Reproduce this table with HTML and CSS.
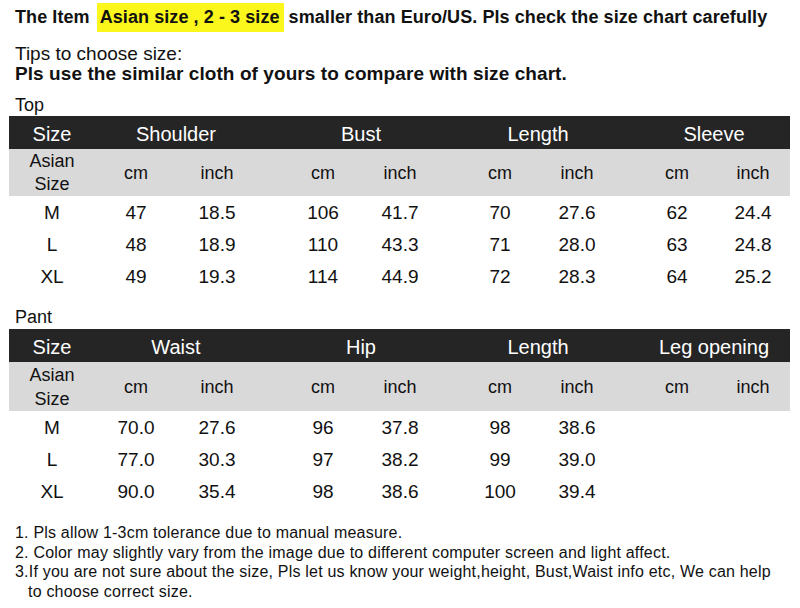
FILE: index.html
```html
<!DOCTYPE html>
<html lang="en">
<head>
<meta charset="utf-8">
<title>Size chart</title>
<link rel="stylesheet" href="styles.css">
</head>
<body>
<div class="headline">
  <span>The Item</span>
  <span class="hl">Asian size , 2 - 3 size</span>
  <span class="rest">smaller than Euro/US. Pls check the size chart carefully</span>
</div>
<p class="tips">Tips to choose size:</p>
<p class="tips-bold">Pls use the similar cloth of yours to compare with size chart.</p>

<p class="label">Top</p>
<div class="chart">
  <div class="row head">
    <div class="c-size">Size</div>
    <div class="g1">Shoulder</div>
    <div class="g2">Bust</div>
    <div class="g3">Length</div>
    <div class="g4">Sleeve</div>
  </div>
  <div class="row cells sub">
    <div class="asian">Asian<br>Size</div>
    <div>cm</div><div>inch</div>
    <div>cm</div><div>inch</div>
    <div>cm</div><div>inch</div>
    <div>cm</div><div>inch</div>
  </div>
  <div class="rows">
    <div class="row cells data"><div>M</div><div>47</div><div>18.5</div><div>106</div><div>41.7</div><div>70</div><div>27.6</div><div>62</div><div>24.4</div></div>
    <div class="row cells data"><div>L</div><div>48</div><div>18.9</div><div>110</div><div>43.3</div><div>71</div><div>28.0</div><div>63</div><div>24.8</div></div>
    <div class="row cells data"><div>XL</div><div>49</div><div>19.3</div><div>114</div><div>44.9</div><div>72</div><div>28.3</div><div>64</div><div>25.2</div></div>
  </div>
</div>

<p class="label label-pant">Pant</p>
<div class="chart chart-pant">
  <div class="row head">
    <div class="c-size">Size</div>
    <div class="g1">Waist</div>
    <div class="g2">Hip</div>
    <div class="g3">Length</div>
    <div class="g4">Leg opening</div>
  </div>
  <div class="row cells sub sub-pant">
    <div class="asian">Asian<br>Size</div>
    <div>cm</div><div>inch</div>
    <div>cm</div><div>inch</div>
    <div>cm</div><div>inch</div>
    <div>cm</div><div>inch</div>
  </div>
  <div class="rows">
    <div class="row cells data"><div>M</div><div>70.0</div><div>27.6</div><div>96</div><div>37.8</div><div>98</div><div>38.6</div></div>
    <div class="row cells data"><div>L</div><div>77.0</div><div>30.3</div><div>97</div><div>38.2</div><div>99</div><div>39.0</div></div>
    <div class="row cells data"><div>XL</div><div>90.0</div><div>35.4</div><div>98</div><div>38.6</div><div>100</div><div>39.4</div></div>
  </div>
</div>

<ol class="notes">
  <li>1. Pls allow 1-3cm tolerance due to manual measure.</li>
  <li>2. Color may slightly vary from the image due to different computer screen and light affect.</li>
  <li class="hang">3.If you are not sure about the size, Pls let us know your weight,height, Bust,Waist info etc, We can help to choose correct size.</li>
</ol>
</body>
</html>
```

FILE: styles.css
```css
html, body {
  margin: 0;
  padding: 0;
  background: #ffffff;
}

body {
  font-family: "Liberation Sans", Arial, sans-serif;
  color: #111111;
}

.headline {
  display: flex;
  align-items: center;
  height: 29px;
  margin: 3px 0 0 15px;
  font-size: 18px;
  font-weight: bold;
  white-space: nowrap;
  letter-spacing: 0.08px;
}

.hl {
  background: #fbf71c;
  margin-left: 7px;
  padding: 0 4px 0 3px;
  height: 29px;
  line-height: 29px;
}

.rest {
  margin-left: 5px;
}

.tips {
  margin: 12px 0 0 15px;
  font-size: 19px;
  line-height: 20px;
}

.tips-bold {
  margin: 0 0 0 15px;
  font-size: 19px;
  line-height: 20px;
  font-weight: bold;
  letter-spacing: 0.08px;
}

.label {
  margin: 10px 0 0 15px;
  font-size: 18px;
  line-height: 22px;
}

.label-pant {
  margin-top: 13px;
}

.chart {
  margin-left: 9px;
  width: 781px;
}

.chart-pant {
  margin-top: 1px;
}

.row {
  display: grid;
  grid-template-columns: 86px 82px 80px 27px 78px 76px 23px 78px 76px 23px 78px 74px;
  align-items: center;
  text-align: center;
  box-sizing: border-box;
}

.cells > div:nth-child(4) { grid-column: 5; }
.cells > div:nth-child(6) { grid-column: 8; }
.cells > div:nth-child(8) { grid-column: 11; }

.head {
  background: #252525;
  color: #ffffff;
  font-size: 20px;
  height: 33px;
  padding-top: 3px;
}

.head > .c-size { grid-column: 1; }
.head > .g1 { grid-column: 2 / 4; }
.head > .g2 { grid-column: 5 / 7; }
.head > .g3 { grid-column: 8 / 10; }
.head > .g4 { grid-column: 11 / 13; }

.sub {
  background: #d9d9d9;
  font-size: 18px;
  height: 47px;
  padding-top: 1px;
}

.sub .asian {
  line-height: 23px;
}

.sub-pant {
  height: 49px;
}

.sub-pant .asian {
  line-height: 24px;
}

.rows {
  padding-top: 1px;
}

.data {
  height: 32px;
  font-size: 19px;
}

.notes {
  list-style: none;
  margin: 15px 0 0 15px;
  padding: 0;
  width: 762px;
  font-size: 16px;
  line-height: 19.5px;
  letter-spacing: 0.2px;
}

.notes .hang {
  padding-left: 13px;
  text-indent: -13px;
}
```
